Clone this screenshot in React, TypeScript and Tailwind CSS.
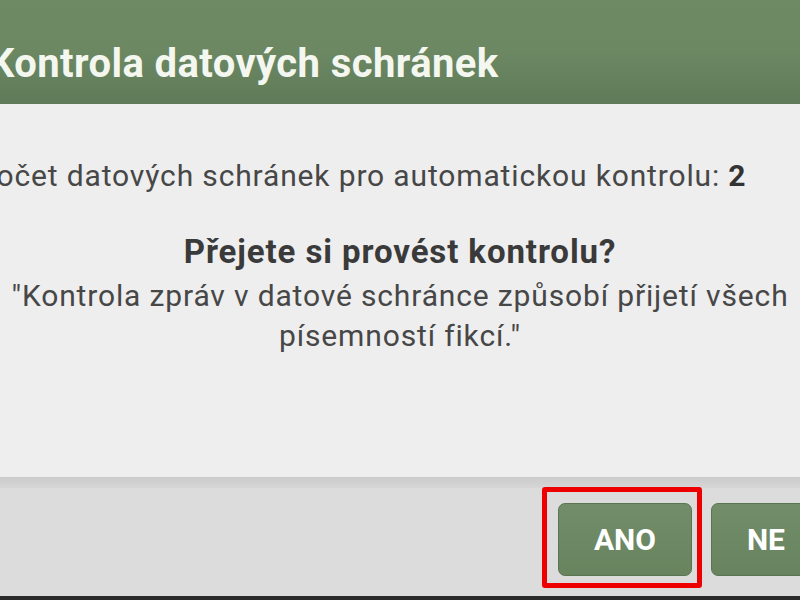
export default function App() {
  return (
    <div className="w-[800px] h-[600px] overflow-hidden bg-[#2a2a2a]" style={{ fontFamily: "Roboto, 'Noto Sans', sans-serif" }}>
      <div className="w-[920px] -ml-[60px] h-[596px] flex flex-col">
        {/* Header */}
        <div className="h-[104px] shrink-0 bg-gradient-to-b from-[#6d8a65] via-[#6b8863] to-[#5f7a58] pl-[49px] pt-[44px]">
          <h1 className="text-[40px] leading-[40px] font-bold text-[#f4f7ef] tracking-[0.4px]">
            Kontrola datových schránek
          </h1>
        </div>

        {/* Body */}
        <div className="flex-1 bg-[#eeeeee] pt-[52px] text-[#474747]">
          <p className="pl-[37px] text-[30px] leading-[40px] tracking-[0.85px] whitespace-nowrap">
            Počet datových schránek pro automatickou kontrolu: <span className="font-bold text-[#333]">2</span>
          </p>
          <div className="mt-[36px] text-center">
            <p className="text-[33px] leading-[40px] font-bold text-[#3a3a3a] tracking-[0.9px]">Přejete si provést kontrolu?</p>
            <p className="mt-[4px] text-[30px] leading-[40px] tracking-[0.85px] whitespace-nowrap">
              "Kontrola zpráv v datové schránce způsobí přijetí všech
              <br />
              písemností fikcí."
            </p>
          </div>
        </div>

        {/* Footer */}
        <div className="h-[119px] shrink-0 bg-[#dcdcdc] relative">
          <div className="h-[11px] bg-gradient-to-b from-[#cbcbcb] to-[#d6d6d6]" />
          <div className="flex justify-end gap-[19px] pr-[39px] pt-[15px]">
            <div className="relative">
              <button className="h-[73px] px-[35px] rounded-[7px] border border-[#5a7454] bg-gradient-to-b from-[#718d69] to-[#68845f] text-white text-[30px] font-bold">
                ANO
              </button>
              <div className="absolute left-[-16px] top-[-16px] w-[160px] h-[101px] border-[5px] border-[#ee0000] rounded-[3px] pointer-events-none" />
            </div>
            <button className="h-[73px] px-[35px] rounded-[7px] border border-[#5a7454] bg-gradient-to-b from-[#718d69] to-[#68845f] text-white text-[30px] font-bold">
              NE
            </button>
          </div>
        </div>
      </div>
    </div>
  );
}
